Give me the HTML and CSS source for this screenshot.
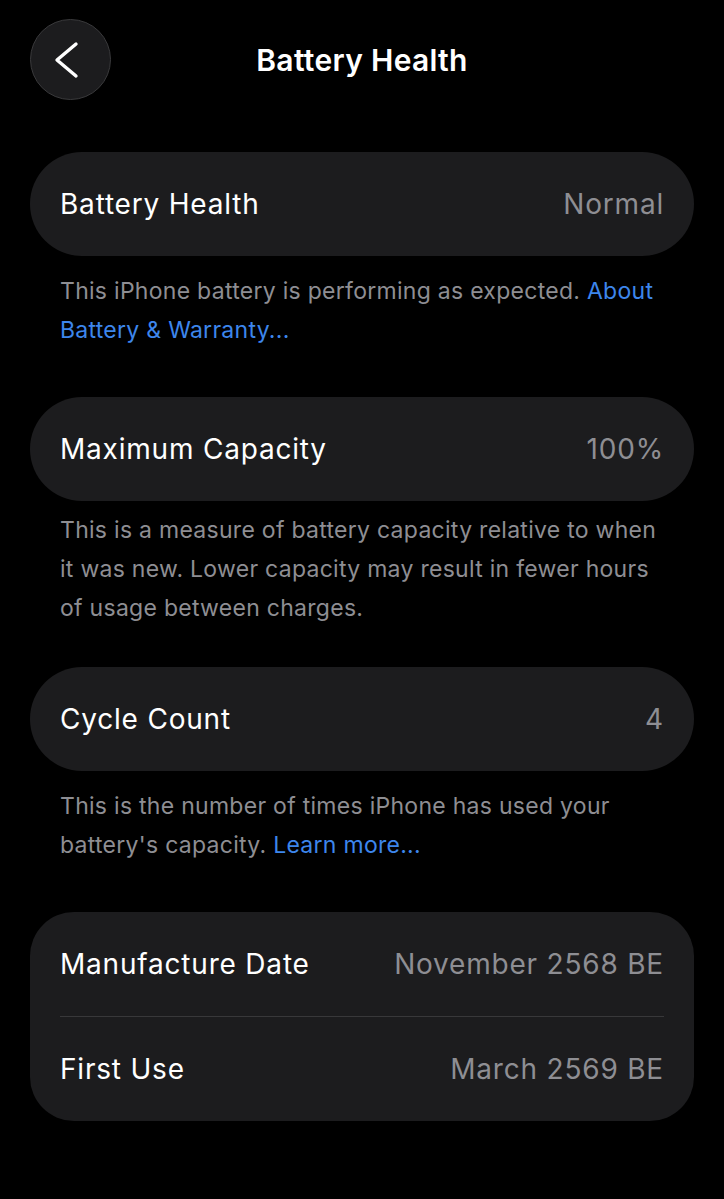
FILE: index.html
```html
<!DOCTYPE html>
<html>
<head>
    <title>Battery Health</title>
    <meta charset="utf-8">
    <link rel="stylesheet" href="styles.css">
</head>
<body>
    <div class="screen">
        <div class="nav">
            <button class="back" aria-label="Back">
                <svg width="40" height="40" viewBox="0 0 40 40">
                    <path d="M27 4 L8 20 L27 36" fill="none" stroke="#fff" stroke-width="3.4" stroke-linecap="round" stroke-linejoin="round"/>
                </svg>
            </button>
            <h1>Battery Health</h1>
            <div></div>
        </div>

        <div class="group">
            <div class="row">
                <span class="label">Battery Health</span>
                <span class="value">Normal</span>
            </div>
        </div>
        <p class="note">This iPhone battery is performing as expected. <a href="#">About Battery &amp; Warranty...</a></p>

        <div class="group">
            <div class="row">
                <span class="label">Maximum Capacity</span>
                <span class="value">100%</span>
            </div>
        </div>
        <p class="note tight">This is a measure of battery capacity relative to when it was new. Lower capacity may result in fewer hours of usage between charges.</p>

        <div class="group">
            <div class="row">
                <span class="label">Cycle Count</span>
                <span class="value">4</span>
            </div>
        </div>
        <p class="note">This is the number of times iPhone has used your battery's capacity. <a href="#">Learn more...</a></p>

        <div class="group list">
            <div class="row">
                <span class="label">Manufacture Date</span>
                <span class="value">November 2568 BE</span>
            </div>
            <div class="row">
                <span class="label">First Use</span>
                <span class="value">March 2569 BE</span>
            </div>
        </div>
    </div>
</body>
</html>
```

FILE: styles.css
```css
body {
    margin: 0;
    padding: 0;
    background: #000;
    color: #fff;
    font-family: Inter, "Noto Sans", sans-serif;
}
.screen {
    padding: 19px 30px 40px;
}
.nav {
    display: grid;
    grid-template-columns: 81px 1fr 81px;
    align-items: center;
    height: 81px;
    margin-bottom: 52px;
}
.back {
    width: 81px;
    height: 81px;
    border-radius: 50%;
    background: #1c1c1e;
    border: 1.5px solid #3a3a3c;
    display: flex;
    align-items: center;
    justify-content: center;
    padding: 0 4px 0 0;
    cursor: pointer;
}
h1 {
    margin: 0;
    text-align: center;
    font-size: 30px;
    font-weight: 600;
    letter-spacing: 0.3px;
}
.group {
    background: #1c1c1e;
    border-radius: 52px;
}
.list {
    border-radius: 44px;
}
.row {
    height: 104px;
    display: flex;
    align-items: center;
    justify-content: space-between;
    padding: 0 30px;
    font-size: 28px;
    letter-spacing: 0.8px;
}
.list .row + .row {
    border-top: 1px solid #38383a;
    margin: 0 30px;
    padding: 0;
}
.list .row:first-child {
    margin: 0 30px;
    padding: 0;
}
.value {
    color: #8e8e93;
}
.note {
    margin: 0;
    padding: 16px 30px 47px;
    font-size: 23px;
    line-height: 39px;
    color: #8e8e93;
    letter-spacing: 0.28px;
}
.note.tight {
    padding-top: 10px;
    padding-bottom: 39px;
}
.note a {
    color: #3d86ec;
    text-decoration: none;
}
```
